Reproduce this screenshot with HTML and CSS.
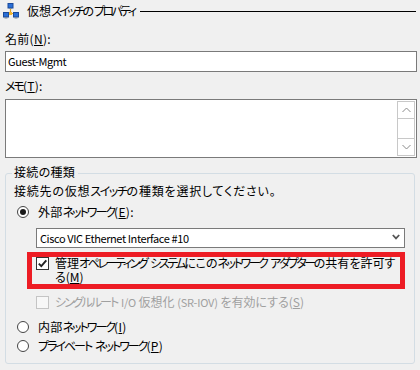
FILE: index.html
```html
<!DOCTYPE html>
<html lang="ja">
<head>
<meta charset="utf-8">
<link rel="stylesheet" href="styles.css">
</head>
<body>
<div class="page">
  <div class="title">
    <svg class="icon" width="16" height="16" viewBox="0 0 16 16">
      <path d="M7.5 6v4M2.5 12h3M10 12h3.5M5 10.5h5" stroke="#e0a020" stroke-width="1.2" fill="none"/>
      <rect x="6" y="9" width="3" height="3" fill="#f2b632"/>
      <rect x="5" y="0.5" width="5" height="4.5" fill="#2a6fd6" stroke="#1b4a9a" stroke-width="1"/>
      <rect x="6" y="5" width="3" height="1" fill="#7a8aa0"/>
      <rect x="0.5" y="9.5" width="5" height="4.5" fill="#2a6fd6" stroke="#1b4a9a" stroke-width="1"/>
      <rect x="1.5" y="14" width="3" height="1.5" fill="#7a8aa0"/>
      <rect x="10.5" y="9.5" width="5" height="4.5" fill="#2a6fd6" stroke="#1b4a9a" stroke-width="1"/>
      <rect x="11.5" y="14" width="3" height="1.5" fill="#7a8aa0"/>
    </svg>
    <span class="title-text">仮想<span class="k">スイッチ</span>の<span class="k">プロパティ</span></span>
    <span class="title-line"></span>
  </div>

  <div class="label lbl-name">名前(<u>N</u>):</div>
  <div class="textbox">Guest-Mgmt</div>

  <div class="label lbl-memo"><span class="k">メモ</span>(<u>T</u>):</div>
  <div class="memo">
    <div class="scrollbar">
      <div class="sb-btn">
        <svg width="9" height="6" viewBox="0 0 9 6"><path d="M0.5 5L4.5 1L8.5 5" stroke="#8a8a8a" stroke-width="1" fill="none"/></svg>
      </div>
      <div class="sb-track"></div>
      <div class="sb-btn">
        <svg width="9" height="6" viewBox="0 0 9 6"><path d="M0.5 1L4.5 5L8.5 1" stroke="#8a8a8a" stroke-width="1" fill="none"/></svg>
      </div>
    </div>
  </div>

  <div class="group">
    <div class="legend">接続の種類</div>
    <div class="desc">接続先の仮想<span class="k">スイッチ</span>の種類を選択してください。</div>

    <div class="radio-row first">
      <span class="radio checked"><span class="dot"></span></span>
      <span>外部<span class="k">ネットワーク</span>(<u>E</u>):</span>
    </div>

    <div class="select">
      <span class="select-text">Cisco VIC Ethernet Interface #10</span>
      <svg class="select-arrow" width="8" height="6" viewBox="0 0 8 6"><path d="M0.8 1L4 4.4L7.2 1" stroke="#555" stroke-width="1.8" fill="none"/></svg>
    </div>

    <div class="highlight">
      <div class="check-row">
        <span class="checkbox">
          <svg width="11" height="11" viewBox="0 0 11 11"><path d="M1.8 5.6L4.3 8.2L9.3 2.4" stroke="#222" stroke-width="1.9" fill="none"/></svg>
        </span>
        <span class="check-text tight">管理<span class="k">オペレーティング</span><span class="sp"> </span><span class="k">システム</span>にこの<span class="k">ネットワーク</span><span class="sp"> </span><span class="k">アダプター</span>の共有を許可す<br>る(<u>M</u>)</span>
      </div>
    </div>

    <div class="check-row disabled">
      <span class="checkbox off"></span>
      <span class="check-text"><span class="k">シングルルート</span><span class="sp"> </span><span class="lat">I/O</span> 仮想化 <span class="lat">(SR-IOV)</span> を有効にする(<u>S</u>)</span>
    </div>

    <div class="radio-row second">
      <span class="radio"></span>
      <span>内部<span class="k">ネットワーク</span>(<u>I</u>)</span>
    </div>
    <div class="radio-row third">
      <span class="radio"></span>
      <span><span class="k">プライベート</span><span class="sp"> </span><span class="k">ネットワーク</span>(<u>P</u>)</span>
    </div>
  </div>
</div>
</body>
</html>
```

FILE: styles.css
```css
html, body {
  margin: 0;
  padding: 0;
  background: #f0f0f0;
}
body {
  width: 420px;
  height: 370px;
  overflow: hidden;
  font-family: "Noto Sans CJK JP", "Noto Sans", sans-serif;
  font-size: 12px;
  font-feature-settings: "palt";
  letter-spacing: 0.3px;
  color: #000;
}
.k {
  letter-spacing: -2px;
}
.sp {
  letter-spacing: 0;
  padding-left: 1px;
}
.lat {
  font-size: 11px;
  letter-spacing: -0.2px;
}
u {
  text-decoration: underline;
  text-underline-offset: 1px;
}
.page {
  display: flex;
  flex-direction: column;
}
.title {
  height: 22px;
  display: flex;
  align-items: flex-start;
}
.icon {
  margin: 3px 0 0 3px;
  flex: none;
}
.title-text {
  margin-left: 8px;
  line-height: 22px;
  white-space: nowrap;
  letter-spacing: 0;
}
.title-text .k {
  letter-spacing: -2.6px;
}
.title-line {
  flex: 1;
  height: 1px;
  background: #000;
  margin: 11px 4px 0 6px;
}
.label {
  line-height: 16px;
  height: 16px;
  margin-left: 5px;
}
.lbl-name { margin-top: 9px; }
.lbl-memo { margin-top: 6px; }
.textbox {
  box-sizing: border-box;
  margin: 4px 0 0 5px;
  width: 412px;
  height: 21px;
  border: 1px solid #7a7a7a;
  background: #fff;
  padding-left: 2px;
  line-height: 19px;
  font-size: 11px;
  letter-spacing: -0.4px;
}
.memo {
  box-sizing: border-box;
  margin: 5px 0 0 5px;
  width: 412px;
  height: 59px;
  border: 1px solid #7a7a7a;
  background: #fff;
  display: flex;
  justify-content: flex-end;
  padding: 1px 1px 1px 0;
}
.scrollbar {
  box-sizing: border-box;
  width: 18px;
  display: flex;
  flex-direction: column;
  border: 1px solid #c8c8c8;
  background: #fff;
}
.sb-btn {
  height: 16px;
  display: flex;
  align-items: center;
  justify-content: center;
}
.sb-track {
  flex: 1;
  border-top: 1px solid #c8c8c8;
  border-bottom: 1px solid #c8c8c8;
}
.group {
  box-sizing: border-box;
  margin: 15px 0 0 5px;
  width: 410px;
  height: 191px;
  border: 1px solid #d3dde4;
  border-radius: 3px;
  display: flex;
  flex-direction: column;
  align-items: flex-start;
}
.legend {
  margin: -10px 0 0 6px;
  padding: 0 3px 0 2px;
  line-height: 16px;
  height: 16px;
  background: #f0f0f0;
}
.desc {
  margin: 3px 0 0 8px;
  line-height: 16px;
  height: 16px;
  letter-spacing: 0.8px;
}
.desc .k {
  letter-spacing: -1.4px;
}
.radio-row {
  display: flex;
  align-items: center;
  height: 16px;
  line-height: 16px;
  margin-left: 11px;
}
.radio-row.first { margin-top: 5px; }
.radio-row.second { margin-top: 9px; }
.radio-row.third { margin-top: 3px; }
.radio {
  box-sizing: border-box;
  width: 12px;
  height: 12px;
  border: 1px solid #444;
  border-radius: 50%;
  background: #fff;
  margin-right: 9px;
  display: flex;
  align-items: center;
  justify-content: center;
}
.radio .dot {
  width: 6px;
  height: 6px;
  border-radius: 50%;
  background: #1a1a1a;
}
.select {
  box-sizing: border-box;
  margin: 8px 0 0 30px;
  width: 369px;
  height: 20px;
  border: 1px solid #7a7a7a;
  background: #fff;
  display: flex;
  align-items: center;
  justify-content: space-between;
  padding: 0 4px 0 3px;
}
.select-text {
  line-height: 18px;
  white-space: nowrap;
  font-size: 11px;
  letter-spacing: -0.4px;
}
.select-arrow {
  margin-top: -3px;
}
.highlight {
  box-sizing: border-box;
  margin: 4px 0 0 21px;
  width: 378px;
  height: 37px;
  border: 5px solid #ed1c24;
  padding-left: 4px;
}
.check-row {
  display: flex;
  align-items: flex-start;
}
.checkbox {
  box-sizing: border-box;
  flex: none;
  width: 13px;
  height: 13px;
  border: 1px solid #333;
  background: #fff;
  margin-right: 6px;
  display: flex;
  align-items: center;
  justify-content: center;
}
.check-text {
  line-height: 14px;
  margin-top: -1px;
  white-space: nowrap;
}
.check-text.tight {
  letter-spacing: 0;
}
.check-text.tight .k {
  letter-spacing: -2.4px;
}
.check-row.disabled {
  margin: 5px 0 0 30px;
  height: 16px;
  align-items: center;
  color: #a0a0a0;
  letter-spacing: 0;
}
.checkbox.off {
  border-color: #c4c4c4;
  background: #f7f7f7;
}
.check-row.disabled .check-text {
  line-height: 16px;
  margin-top: 0;
}
```
